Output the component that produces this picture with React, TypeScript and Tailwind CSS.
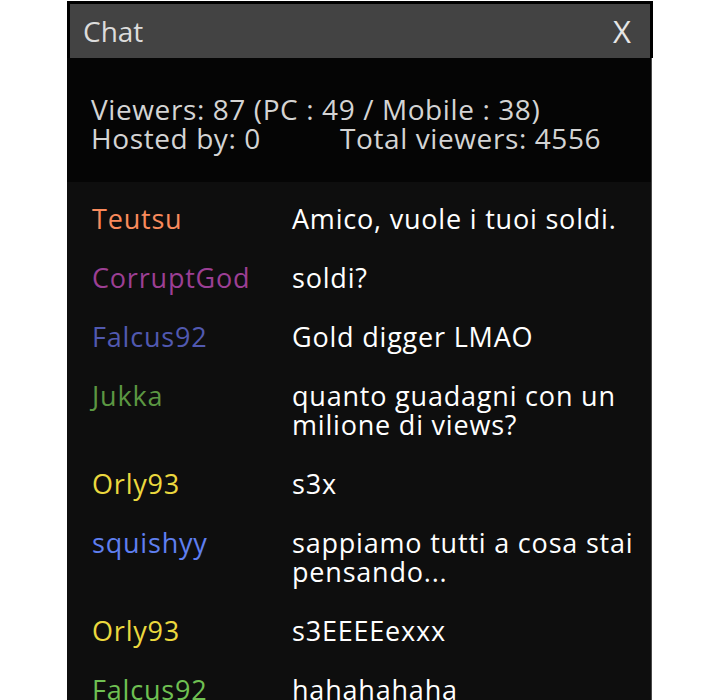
import React from "react";

const rows: { name: string; color: string; msg: React.ReactNode }[] = [
  { name: "Teutsu", color: "text-[#f98a5c]", msg: "Amico, vuole i tuoi soldi." },
  { name: "CorruptGod", color: "text-[#9c3f94]", msg: "soldi?" },
  { name: "Falcus92", color: "text-[#5159b0]", msg: "Gold digger LMAO" },
  { name: "Jukka", color: "text-[#5b9742]", msg: <>quanto guadagni con un<br />milione di views?</> },
  { name: "Orly93", color: "text-[#ebd83e]", msg: "s3x" },
  { name: "squishyy", color: "text-[#5f7ff0]", msg: <>sappiamo tutti a cosa stai<br />pensando...</> },
  { name: "Orly93", color: "text-[#ebd83e]", msg: "s3EEEEexxx" },
  { name: "Falcus92", color: "text-[#6fc052]", msg: "hahahahaha" },
];

export default function App() {
  return (
    <div className="w-[720px] h-[700px] bg-white overflow-hidden" style={{ fontFamily: '"Open Sans", "Noto Sans", sans-serif' }}>
      <div className="ml-[67px] mt-[1px] w-[586px] bg-black pt-[3px] px-[3px]">
        <div className="h-[54px] bg-[#434343] flex items-center justify-between pl-[13px] pr-[19px]">
          <span className="text-[28px] text-[#dcdcdc] leading-none">Chat</span>
          <span className="text-[31px] text-[#e6e6e6] leading-none">X</span>
        </div>
      </div>
      <div className="ml-[67px] w-[585px] border-r border-[#4a4a4a]">
        <div className="bg-[#050505] h-[124px] pl-[24px] pt-[37px] text-[28px] tracking-[0.6px] leading-[29px] text-[#d4d4d4]">
          <div>Viewers: 87 (PC : 49 / Mobile : 38)</div>
          <div className="flex">
            <span className="w-[249px]">Hosted by: 0</span>
            <span>Total viewers: 4556</span>
          </div>
        </div>
        <div className="bg-[#0e0e0e] pt-[22px] pb-[40px] flex flex-col gap-[30px] text-[27px] tracking-[0.8px] leading-[29px]">
          {rows.map((r, i) => (
            <div key={i} className="flex pl-[25px]">
              <div className={`w-[200px] shrink-0 ${r.color}`}>{r.name}</div>
              <div className="text-white whitespace-nowrap">{r.msg}</div>
            </div>
          ))}
        </div>
      </div>
    </div>
  );
}
